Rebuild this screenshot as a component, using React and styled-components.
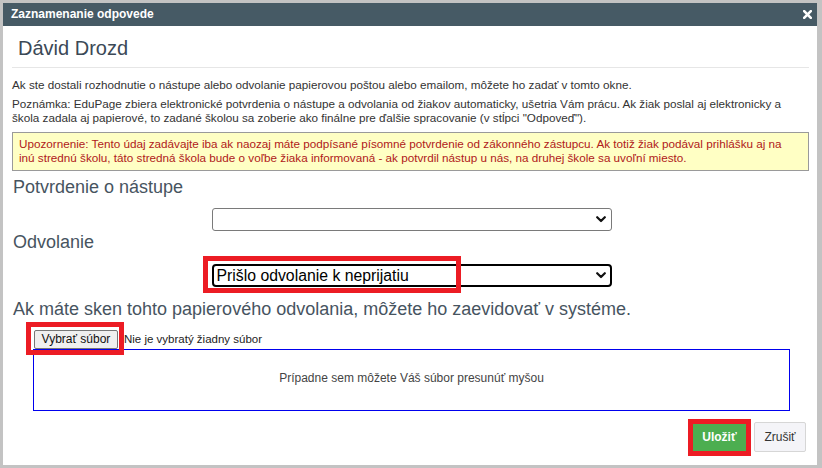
import React from 'react'
import styled, { createGlobalStyle } from 'styled-components'

const GlobalStyle = createGlobalStyle`
  html, body {
    margin: 0;
    padding: 0;
    background: #c3c3c3;
  }
  body {
    font-family: "Liberation Sans", Arial, sans-serif;
  }
  * { box-sizing: border-box; }
`

function Chevron() {
  return (
    <svg width="10" height="7" viewBox="0 0 10 7">
      <path d="M1.2 1.2 L5 5 L8.8 1.2" fill="none" stroke="#111" strokeWidth="2.2" strokeLinecap="round" strokeLinejoin="round" />
    </svg>
  )
}

function CloseIcon() {
  return (
    <svg width="9" height="9" viewBox="0 0 9 9">
      <path d="M1.2 1.2 L7.8 7.8 M7.8 1.2 L1.2 7.8" stroke="#fff" strokeWidth="2.6" strokeLinecap="square" />
    </svg>
  )
}

export default function App() {
  return (
    <>
      <GlobalStyle />
      <Dialog>
        <TitleBar>
          <span>Zaznamenanie odpovede</span>
          <CloseButton><CloseIcon /></CloseButton>
        </TitleBar>

        <Body>
          <Name>Dávid Drozd</Name>
          <Divider />

          <Text>Ak ste dostali rozhodnutie o nástupe alebo odvolanie papierovou poštou alebo emailom, môžete ho zadať v tomto okne.</Text>
          <Text $top={5}>Poznámka: EduPage zbiera elektronické potvrdenia o nástupe a odvolania od žiakov automaticky, ušetria Vám prácu. Ak žiak poslal aj elektronicky a škola zadala aj papierové, to zadané školou sa zoberie ako finálne pre ďalšie spracovanie (v stĺpci "Odpoveď").</Text>

          <Warning>Upozornenie: Tento údaj zadávajte iba ak naozaj máte podpísané písomné potvrdenie od zákonného zástupcu. Ak totiž žiak podával prihlášku aj na inú strednú školu, táto stredná škola bude o voľbe žiaka informovaná - ak potvrdil nástup u nás, na druhej škole sa uvoľní miesto.</Warning>

          <Heading $top={6}>Potvrdenie o nástupe</Heading>
          <SelectRow $top={11}>
            <SelectBox>
              <Select defaultValue="">
                <option value=""></option>
              </Select>
              <Arrow><Chevron /></Arrow>
            </SelectBox>
          </SelectRow>

          <Heading $top={1}>Odvolanie</Heading>
          <SelectRow $top={12}>
            <SelectBox>
              <Select $focused defaultValue="odv">
                <option value="odv">Prišlo odvolanie k neprijatiu</option>
              </Select>
              <Arrow><Chevron /></Arrow>
              <Highlight style={{ left: -9, top: -8, width: 258, height: 37 }} />
            </SelectBox>
          </SelectRow>

          <Heading $top={12}>Ak máte sken tohto papierového odvolania, môžete ho zaevidovať v systéme.</Heading>

          <Upload>
            <FileRow>
              <FileButtonWrap>
                <FileButton>Vybrať súbor</FileButton>
                <Highlight style={{ left: -8, top: -7, width: 98, height: 33 }} />
              </FileButtonWrap>
              <FileName>Nie je vybratý žiadny súbor</FileName>
            </FileRow>
            <DropZone>Prípadne sem môžete Váš súbor presunúť myšou</DropZone>
          </Upload>

          <Footer>
            <Button $primary $highlight>Uložiť</Button>
            <Button>Zrušiť</Button>
          </Footer>
        </Body>
      </Dialog>
    </>
  )
}

const Dialog = styled.div`
  margin: 3px 5px 0 3px;
  height: 462px;
  background: #fff;
  display: flex;
  flex-direction: column;
`

const TitleBar = styled.div`
  height: 23px;
  background: #465a65;
  color: #fff;
  font-weight: bold;
  font-size: 12px;
  display: flex;
  align-items: center;
  justify-content: space-between;
  padding: 0 5px 1px 8px;
`

const CloseButton = styled.span`
  display: flex;
  align-items: center;
  padding-top: 1px;
`

const Body = styled.div`
  padding: 0 8px 0 9px;
  display: flex;
  flex-direction: column;
`

const Name = styled.div`
  margin-top: 11px;
  padding-left: 6px;
  font-size: 20px;
  line-height: 22px;
  color: #3b4956;
`

const Divider = styled.div`
  margin-top: 8px;
  border-top: 1px solid #e6e6e6;
`

const Text = styled.p`
  margin: ${p => p.$top ?? 10}px 0 0;
  font-size: 11.7px;
  line-height: 14px;
  color: #333;
`

const Warning = styled.div`
  margin-top: 7px;
  padding: 4px 14px 5px 6px;
  background: #ffffc4;
  border: 1px solid #9a9a9a;
  color: #b0201a;
  font-size: 11.7px;
  line-height: 14px;
`

const Heading = styled.div`
  margin-top: ${p => p.$top}px;
  padding-left: 1px;
  font-size: 18px;
  line-height: 20px;
  color: #47545f;
`

const SelectRow = styled.div`
  margin-top: ${p => p.$top}px;
  display: flex;
  justify-content: center;
  padding-left: 2px;
`

const SelectBox = styled.div`
  position: relative;
  width: 400px;
  height: 23px;
`

const Select = styled.select`
  appearance: none;
  width: 100%;
  height: 100%;
  margin: 0;
  padding: 0 20px 0 ${p => (p.$focused ? 3 : 4)}px;
  background: #fff;
  border: ${p => (p.$focused ? '2px solid #000' : '1px solid #7a7a7a')};
  border-radius: ${p => (p.$focused ? 4 : 3)}px;
  font-family: "Liberation Sans", Arial, sans-serif;
  font-size: 15.8px;
  color: #000;
  outline: none;
`

const Arrow = styled.span`
  position: absolute;
  right: 6px;
  top: 8px;
  display: flex;
  pointer-events: none;
`

const Highlight = styled.span`
  position: absolute;
  border: 5px solid #ec1c24;
  pointer-events: none;
`

const Upload = styled.div`
  margin: 10px 19px 0 21px;
  display: flex;
  flex-direction: column;
`

const FileRow = styled.div`
  display: flex;
  align-items: center;
  height: 20px;
`

const FileButtonWrap = styled.div`
  position: relative;
  margin-left: 1px;
`

const FileButton = styled.button`
  height: 19px;
  width: 84px;
  padding: 0;
  background: #efefef;
  border: 1px solid #767676;
  border-radius: 2px;
  font-family: "Liberation Sans", Arial, sans-serif;
  font-size: 12px;
  color: #111;
`

const FileName = styled.span`
  margin-left: 6px;
  font-size: 11.5px;
  color: #222;
`

const DropZone = styled.div`
  height: 62px;
  border: 1px solid #0000ee;
  display: flex;
  align-items: center;
  justify-content: center;
  padding-bottom: 4px;
  font-size: 12px;
  color: #444;
`

const Footer = styled.div`
  margin-top: 11px;
  display: flex;
  justify-content: flex-end;
  align-items: center;
  gap: 8px;
  padding-right: 3px;
`

const Button = styled.button`
  height: ${p => (p.$primary ? 27 : 30)}px;
  width: ${p => (p.$primary ? 53 : 52)}px;
  padding: 0;
  border-radius: ${p => (p.$highlight ? 0 : 2)}px;
  font-family: "Liberation Sans", Arial, sans-serif;
  font-size: 12px;
  font-weight: ${p => (p.$primary ? 'bold' : 'normal')};
  color: ${p => (p.$primary ? '#fff' : '#333')};
  background: ${p => (p.$primary ? '#4cae50' : '#f4f4f8')};
  border: ${p => (p.$primary ? 'none' : '1px solid #d6d6d6')};
  outline: ${p => (p.$highlight ? '5px solid #ec1c24' : 'none')};
`
